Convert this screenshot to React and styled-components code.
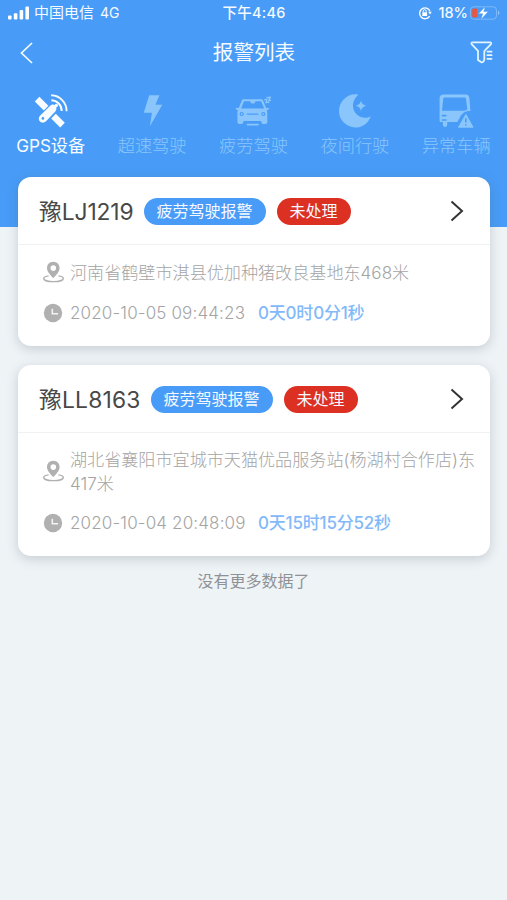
import React from 'react';
import styled, { createGlobalStyle } from 'styled-components';

const colors = {
    blue: '#489cf7',
    blueFaded: '#8ac6fc',
    blueText: '#83b9f8',
    red: '#dc3023',
    page: '#eef3f6',
    text: '#484848',
    muted: '#b0b0b0',
    mutedText: '#a4a4a4',
};

const GlobalStyle = createGlobalStyle`
    * {
        box-sizing: border-box;
    }
    body {
        margin: 0;
        background: ${colors.page};
        font-family: Inter, "Noto Sans CJK SC", sans-serif;
    }
`;

const Page = styled.div`
    min-height: 900px;
    overflow: hidden;
    background: ${colors.page};
`;

const Header = styled.header`
    height: 227px;
    background: ${colors.blue};
    color: #f4faff;
`;

const StatusBar = styled.div`
    height: 26px;
    padding: 0 7px 0 8px;
    display: grid;
    grid-template-columns: 1fr auto 1fr;
    align-items: center;
    font-size: 14px;
    line-height: 26px;
    white-space: nowrap;
`;

const StatusGroup = styled.div`
    display: flex;
    align-items: center;
    justify-content: ${({ $end }) => ($end ? 'flex-end' : 'flex-start')};
`;

const Carrier = styled.span`
    font-size: 15px;
    margin: 0 6px 0 4px;
`;

const Network = styled.span`
    font-size: 14px;
`;

const Clock = styled.span`
    font-size: 14.5px;
    font-weight: 500;
    letter-spacing: 0.25px;
`;

const Percent = styled.span`
    font-size: 14.5px;
    font-weight: 500;
    margin: 0 2px 0 6px;
`;

const NavBar = styled.div`
    height: 54px;
    padding: 0 13px 0 20px;
    display: grid;
    grid-template-columns: 1fr auto 1fr;
    align-items: center;

    svg:last-child {
        justify-self: end;
    }
`;

const Title = styled.h1`
    margin: 0 0 0 -6px;
    font-size: 20.6px;
    font-weight: 400;
    line-height: 30px;
`;

const Tabs = styled.nav`
    display: grid;
    grid-template-columns: repeat(5, 1fr);
    padding-top: 14px;
`;

const Tab = styled.div`
    display: flex;
    flex-direction: column;
    align-items: center;
    color: ${({ $active }) => ($active ? '#f8fcff' : colors.blueFaded)};
    font-size: 17.2px;
    font-weight: ${({ $active }) => ($active ? 400 : 300)};
    line-height: 26px;
    letter-spacing: ${({ $active }) => ($active ? '-0.1px' : '0')};

    svg {
        margin-bottom: 5px;
    }
`;

const CardList = styled.main`
    margin-top: -50px;
    padding: 0 17px 0 18px;
    display: flex;
    flex-direction: column;
    gap: 19px;
`;

const Card = styled.article`
    background: #fff;
    border-radius: 13px;
    box-shadow: 0 3px 12px rgba(70, 85, 95, 0.24);
`;

const CardHead = styled.div`
    height: 68px;
    padding: 1px 25px 0 21px;
    display: flex;
    align-items: center;
    border-bottom: 1px solid #f0f1f2;
`;

const Plate = styled.span`
    color: ${colors.text};
    font-size: 22.8px;
    line-height: 32px;
    letter-spacing: ${({ $tracking }) => $tracking || 0};
    margin: 1px 10px 0 0;
`;

const Pill = styled.span`
    height: 27px;
    padding: 0 13px;
    margin-right: 11px;
    border-radius: 14px;
    background: ${({ $color }) => $color};
    color: #f5f9ff;
    font-size: 16px;
    line-height: 27px;
    white-space: nowrap;
`;

const ArrowSlot = styled.span`
    margin-left: auto;
    display: flex;
`;

const CardBody = styled.div`
    padding: 14px 12px 20px 25px;
`;

const Row = styled.div`
    display: grid;
    grid-template-columns: 21px 1fr;
    column-gap: 6px;
    align-items: center;
    min-height: 26px;
    color: ${colors.mutedText};
    font-size: 17.2px;
    font-weight: 300;

    & + & {
        margin-top: 15px;
    }
`;

const Address = styled.span`
    line-height: 24px;
    font-size: 17.1px;
    margin: 1px 0 -1px;
`;

const TimeLine = styled.span`
    display: flex;
    align-items: baseline;
    line-height: 24px;
    white-space: nowrap;
`;

const Time = styled.span`
    width: 188px;
    font-size: 17px;
    letter-spacing: 0.15px;
`;

const Duration = styled.span`
    color: ${colors.blueText};
    font-size: 17px;
    font-weight: 500;
    letter-spacing: -0.2px;
`;

const Footer = styled.p`
    margin: 13px 0 0;
    text-align: center;
    color: #8f9295;
    font-size: 16px;
    line-height: 24px;
`;

const SignalIcon = () => (
    <svg width="22" height="14" viewBox="0 0 22 14" fill="#fff">
        <rect x="0" y="9.5" width="3.6" height="4" rx="1" />
        <rect x="5.8" y="7.2" width="3.6" height="6.3" rx="1" />
        <rect x="11.6" y="4" width="3.6" height="9.5" rx="1" />
        <rect x="17.4" y="0.5" width="3.6" height="13" rx="1" />
    </svg>
);

const LockIcon = () => (
    <svg width="14" height="14" viewBox="0 0 14 14" fill="none" stroke="#fff">
        <path d="M11.6 10.2A5.4 5.4 0 1 1 12 5.2" strokeWidth="1.4" />
        <path d="M10.2 5.8h3.6L12 8.4z" fill="#fff" stroke="none" />
        <rect x="4.3" y="6.2" width="4.8" height="3.8" rx="0.6" fill="#fff" stroke="none" />
        <path d="M5.2 6.3V5.2a1.5 1.5 0 0 1 3 0v1.1" strokeWidth="1" />
    </svg>
);

const BatteryIcon = () => (
    <svg width="30" height="14" viewBox="0 0 30 14">
        <rect x="0.5" y="0.8" width="26" height="12.4" rx="3.4" fill="none" stroke="#7dbafa" />
        <path d="M28 4.8c1.8.6 1.8 3.8 0 4.4z" fill="#8ac6fc" />
        <rect x="2.2" y="2.4" width="5" height="9.2" rx="1.4" fill="#e9573f" />
        <path d="M15.3 0.4L8.4 7.8h4.2L11 13.6l7.3-8h-4.5z" fill="#fff" stroke="#489cf7" strokeWidth="0.5" />
    </svg>
);

const BackIcon = () => (
    <svg width="14" height="22" viewBox="0 0 14 22" fill="none" stroke="#f4faff" strokeWidth="1.7">
        <path d="M12 1L1.5 11L12 21" />
    </svg>
);

const FilterIcon = () => (
    <svg width="24" height="24" viewBox="0 0 24 24" fill="none" stroke="#e2f5ff" strokeWidth="1.8" strokeLinecap="round" strokeLinejoin="round">
        <path d="M15.4 8.9l5.4-5.6c.8-.9.4-1.9-.8-1.9H2.6c-1.2 0-1.6 1-.8 1.9l6.2 6.6v9l3 2.2c.6.4 1.6.3 2.1-.2.8-.7 1.2-1.6 1.2-2.6v-7.6c0-.6.3-1.3 1.1-1.8z" />
        <path d="M17.4 10.6h4.2M17.4 14.2h4.2M17.4 17.8h4.2" />
    </svg>
);

const SatelliteIcon = () => (
    <svg width="34" height="34" viewBox="0 0 34 34" fill="currentColor">
        <path d="M5.4 2.8L14.4 11.8L9.8 16.4L.8 7.4z" />
        <path d="M21.8 19.8L30.8 28.8L26.2 33.4L17.2 24.4z" />
        <path d="M20.9 11.2c2 1.6 2 4.6.4 6.4l-9.3 9.6c-1.8 1.8-4.4 1.8-6 .2s-1.6-4.2.2-6l9.5-9.2c1.6-1.6 3.6-2.2 5.2-1z" />
        <circle cx="8.9" cy="24.4" r="1.3" fill={colors.blue} />
        <circle cx="22.3" cy="11.5" r="1.7" />
        <g fill="none" stroke="currentColor" strokeWidth="1.9">
            <path d="M17.3 6.2a10.7 10.7 0 0 1 10.4 10.9" />
            <path d="M17.2 1.2a15.8 15.8 0 0 1 15.4 16" />
        </g>
    </svg>
);

const BoltIcon = () => (
    <svg width="34" height="34" viewBox="0 0 34 34" fill="currentColor">
        <path d="M14.2 1.2h10.2l-4 9.6h6.9L14.9 32.2l2-13.4H8.8z" />
    </svg>
);

const CarIcon = () => (
    <svg width="36" height="34" viewBox="0 0 36 34">
        <path
            fill="currentColor"
            fillRule="evenodd"
            d="M9 5.2h17c1 0 1.7.5 2.1 1.4l3 7.5 1.6-.4c.9-.1 1.3.3 1.2 1.1 0 .6-.4.9-1 1l-1.2.3c.4.9.6 1.7.6 2.8v9.1c0 1.2-.8 2-2 2h-2c-1.2 0-2-.8-2-2V27H8.4v1c0 1.2-.8 2-2 2h-2c-1.2 0-2-.8-2-2v-9.1c0-1.1.2-1.9.6-2.8l-1.2-.3c-.7-.1-1-.5-1-1.1 0-.8.4-1.1 1.2-1l1.8.4 3-7.5c.4-.9 1-1.4 2.2-1.4zM9 7.2l-2.9 7.2h23.1L26.1 7.2h-5.4l-1.5 2.2h-2.8l-1.5-2.2z"
        />
        <g fill="none" stroke={colors.blue} strokeLinecap="round" strokeWidth="1.2">
            <circle cx="6.7" cy="20" r="1.5" />
            <circle cx="28.3" cy="20" r="1.5" />
            <path d="M12.2 20.1h10.8" />
        </g>
        <path d="M12.5 30.6h10.4" stroke="currentColor" strokeWidth="1.8" strokeLinecap="round" />
        <path d="M31.4 3.8l3.8-.4-1.4 3.2 2.2-.2M29.2 5.6l2.6 0-.8 2.8 3.2-.2" fill="none" stroke="currentColor" strokeWidth="1.4" />
    </svg>
);

const MoonIcon = () => (
    <svg width="34" height="34" viewBox="0 0 34 34" fill="currentColor">
        <path d="M20.3.8C13.4 6.6 13.6 16 18.8 20.6c4.4 3.8 9.8 3.8 13.9 1.8C30.3 29 24.6 33.5 17.4 33.5 8.4 33.5 1 26.2 1 17.1S8.4.3 17.4.3c1.1 0 2 .1 2.9.5z" />
        <path d="M23 6.3c.6 3.3 2 4.9 5.6 5.5-3.6.6-5 2.2-5.6 5.5-.6-3.3-2-4.9-5.6-5.5 3.6-.6 5-2.2 5.6-5.5z" />
    </svg>
);

const BusIcon = () => (
    <svg width="36" height="34" viewBox="0 0 36 34">
        <path
            fill="currentColor"
            fillRule="evenodd"
            d="M5.5.5h22c2.3 0 3.7 1.2 3.9 3.3l1 13.2c-4.6-.2-7.8 1.5-9.8 5.1L19.4 28H9.2v2.6c0 1.4-.8 2.3-2.1 2.3s-2.2-.9-2.2-2.3V28H3c-1 0-1.4-.5-1.4-1.5V4.2C1.7 1.8 3 .5 5.5.5zM6.8 3.4c-1 0-1.5.5-1.6 1.5L4 16.7h22.3l3-1.2-1.3-10.6c-.1-1-.6-1.5-1.6-1.5z"
        />
        <g stroke={colors.blue} strokeWidth="1.7" strokeLinecap="round">
            <path d="M4.5 21.6h3.3M4.5 26h3.3" />
        </g>
        <path d="M27.9 20.5L35 33.2H20.5z" fill="currentColor" stroke="currentColor" strokeWidth="1" strokeLinejoin="round" />
        <path d="M27.8 24.2v4.3M27.8 30.2v1.4" stroke={colors.blue} strokeWidth="1.6" />
    </svg>
);

const ArrowIcon = () => (
    <svg width="15" height="22" viewBox="0 0 15 22" fill="none" stroke="#333" strokeWidth="2">
        <path d="M1.5 1.5L12 11L1.5 20.5" />
    </svg>
);

const PinIcon = () => (
    <svg width="21" height="22" viewBox="0 0 21 22">
        <path
            fill={colors.muted}
            fillRule="evenodd"
            d="M10.3.7c3.7 0 6.3 2.8 6.3 6.2 0 3.7-3.3 7.1-6.3 10.1C7.3 14 4 10.6 4 6.9 4 3.5 6.6.7 10.3.7zm0 3.6a2.8 2.8 0 1 0 0 5.6 2.8 2.8 0 0 0 0-5.6z"
        />
        <path d="M5.6 14.9c-2.9.4-4.9 1.3-4.9 2.5 0 1.9 4.4 3.2 9.8 3.2s9.8-1.3 9.8-3.2c0-1.2-2-2.1-4.9-2.5" fill="none" stroke={colors.muted} strokeWidth="1.4" />
    </svg>
);

const TimeIcon = () => (
    <svg width="21" height="20" viewBox="0 0 21 20">
        <circle cx="10" cy="10" r="9.2" fill={colors.muted} />
        <path d="M9.3 5.8v5h5.8" fill="none" stroke="#f4f4f4" strokeWidth="1.5" />
    </svg>
);

const tabs = [
    { label: 'GPS设备', Icon: SatelliteIcon },
    { label: '超速驾驶', Icon: BoltIcon },
    { label: '疲劳驾驶', Icon: CarIcon },
    { label: '夜间行驶', Icon: MoonIcon },
    { label: '异常车辆', Icon: BusIcon },
];

const alarms = [
    {
        plate: '豫LJ1219',
        tracking: '-0.1px',
        type: '疲劳驾驶报警',
        status: '未处理',
        address: '河南省鹤壁市淇县优加种猪改良基地东468米',
        time: '2020-10-05 09:44:23',
        duration: '0天0时0分1秒',
    },
    {
        plate: '豫LL8163',
        tracking: '0.2px',
        type: '疲劳驾驶报警',
        status: '未处理',
        address: '湖北省襄阳市宜城市天猫优品服务站(杨湖村合作店)东417米',
        time: '2020-10-04 20:48:09',
        duration: '0天15时15分52秒',
    },
];

function AlarmCard({ alarm }) {
    return (
        <Card>
            <CardHead>
                <Plate $tracking={alarm.tracking}>{alarm.plate}</Plate>
                <Pill $color={colors.blue}>{alarm.type}</Pill>
                <Pill $color={colors.red}>{alarm.status}</Pill>
                <ArrowSlot>
                    <ArrowIcon />
                </ArrowSlot>
            </CardHead>
            <CardBody>
                <Row>
                    <PinIcon />
                    <Address>{alarm.address}</Address>
                </Row>
                <Row>
                    <TimeIcon />
                    <TimeLine>
                        <Time>{alarm.time}</Time>
                        <Duration>{alarm.duration}</Duration>
                    </TimeLine>
                </Row>
            </CardBody>
        </Card>
    );
}

function App() {
    return (
        <Page>
            <GlobalStyle />
            <Header>
                <StatusBar>
                    <StatusGroup>
                        <SignalIcon />
                        <Carrier>中国电信</Carrier>
                        <Network>4G</Network>
                    </StatusGroup>
                    <Clock>下午4:46</Clock>
                    <StatusGroup $end>
                        <LockIcon />
                        <Percent>18%</Percent>
                        <BatteryIcon />
                    </StatusGroup>
                </StatusBar>
                <NavBar>
                    <BackIcon />
                    <Title>报警列表</Title>
                    <FilterIcon />
                </NavBar>
                <Tabs>
                    {tabs.map(({ label, Icon }, index) => (
                        <Tab key={label} $active={index === 0}>
                            <Icon />
                            {label}
                        </Tab>
                    ))}
                </Tabs>
            </Header>
            <CardList>
                {alarms.map((alarm) => (
                    <AlarmCard key={alarm.plate} alarm={alarm} />
                ))}
            </CardList>
            <Footer>没有更多数据了</Footer>
        </Page>
    );
}

export default App;
